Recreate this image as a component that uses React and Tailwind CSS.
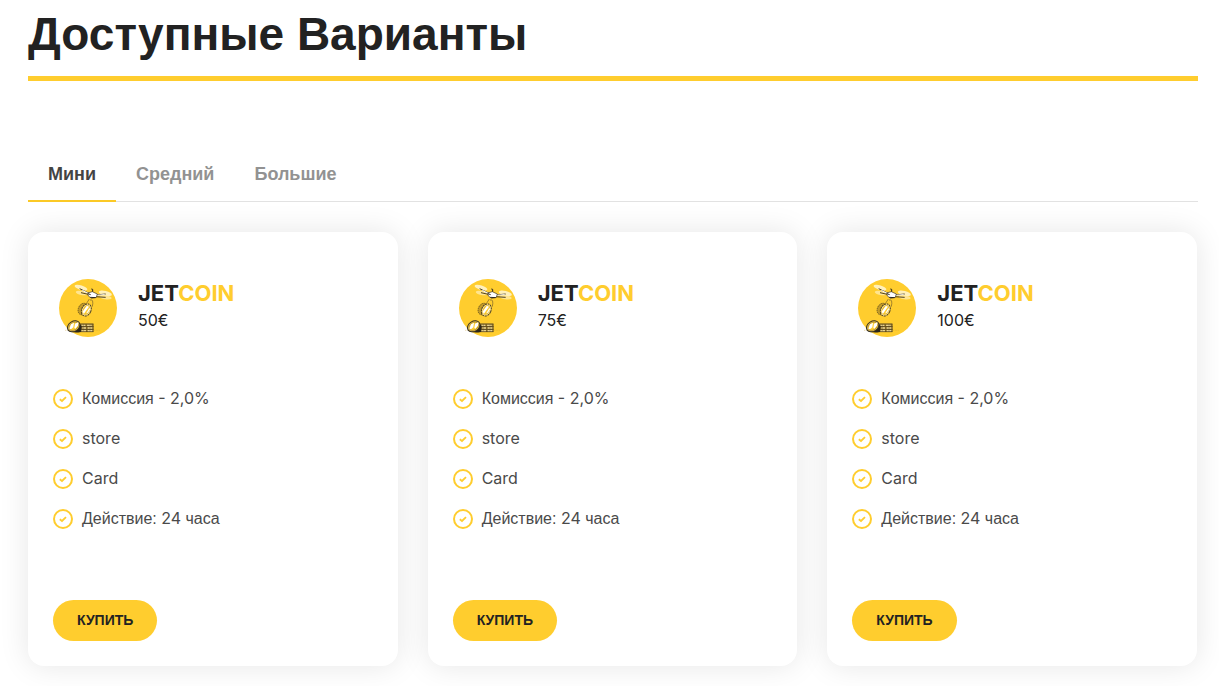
import { useState } from "react";

const tabs = ["Мини", "Средний", "Большие"];

const plans = [
  { id: 1, price: "50€" },
  { id: 2, price: "75€" },
  { id: 3, price: "100€" },
];

const features = [
  { label: "Комиссия", value: "- 2,0%" },
  { value: "store" },
  { value: "Card" },
  { label: "Действие:", value: "24", suffix: "часа" },
];

function DroneLogo() {
  return (
    <svg viewBox="0 0 174 174" className="size-[58px] shrink-0" aria-hidden="true">
      <circle cx="87" cy="87" r="87" fill="#ffcd2e" />
      {/* rotors */}
      <g fill="#fff0bb">
        <ellipse cx="66" cy="26" rx="20" ry="7" transform="rotate(17 66 26)" />
        <ellipse cx="68" cy="42" rx="18" ry="6" transform="rotate(10 68 42)" opacity="0.7" />
        <ellipse cx="139" cy="43" rx="20" ry="7" transform="rotate(14 139 43)" />
        <ellipse cx="140" cy="55" rx="18" ry="6" transform="rotate(8 140 55)" opacity="0.7" />
      </g>
      {/* body and arms */}
      <path d="M62 29l28 14M66 41l26 6M110 48l30-3M108 53l32 2" stroke="#4b3e20" strokeWidth="3" fill="none" />
      <path d="M70 34l18 9M113 49l24-2" stroke="#fff" strokeWidth="3" fill="none" />
      <path d="M86 42l14-4 15 7-3 10-14 3-10-7z" fill="#fff" stroke="#3a3220" strokeWidth="2" />
      <path d="M94 55l16 1M101 38v-7l-4-1M87 44l8 3" stroke="#29251c" strokeWidth="3" fill="none" />
      <path d="M91 60l-9 14M93 63q12-4 7 20" stroke="#755f29" strokeWidth="2" fill="none" />
      {/* carried coins */}
      <g transform="rotate(25 78 92)">
        <ellipse cx="71" cy="93" rx="13" ry="18" fill="#c59c27" stroke="#4b3e20" strokeWidth="2" strokeDasharray="4 2" />
        <ellipse cx="82" cy="91" rx="14" ry="19" fill="#ffe48a" stroke="#4b3e20" strokeWidth="3" strokeDasharray="6 2" />
        <ellipse cx="82" cy="91" rx="9" ry="14" fill="#ffcd2e" stroke="#a98526" strokeWidth="1" />
        <path d="M78 79l-4 21 6 5 5-26z" fill="#fff" />
        <path d="M88 81l-2 20 4-5 1-11z" fill="#fff" />
      </g>
      {/* coins on the ground */}
      <path d="M18 154h22M70 154h52" stroke="#c39b2a" strokeWidth="1" strokeDasharray="3 2" />
      <path d="M63 134h41v25H63z" fill="#9b7c2c" />
      <path d="M63 135h40M65 143h39M65 151h39M65 158h38" stroke="#3a3220" strokeWidth="2" fill="none" />
      <path d="M67 139h12M84 139h14M70 147h11M86 147h14M67 155h14M86 155h14" stroke="#e8d392" strokeWidth="4" />
      <path d="M73 135v22M83 137v21M93 136v22M102 135v23" stroke="#51411c" strokeWidth="1" />
      <path d="M27 153q13 11 39 6l2-18-16-16z" fill="#29251c" />
      <ellipse cx="44" cy="142" rx="20" ry="15" fill="#e3bf50" stroke="#3a3220" strokeWidth="3" transform="rotate(-32 44 142)" />
      <ellipse cx="44" cy="142" rx="15" ry="11" fill="#ffcd2e" stroke="#5e4b20" strokeWidth="1" transform="rotate(-32 44 142)" />
      <path d="M31 149l5-13 9-5-2 14-7 6zM46 146l2-12 10-4-1 10-8 9z" fill="#fff" />
    </svg>
  );
}

function CheckIcon() {
  return (
    <svg viewBox="0 0 20 20" className="size-5 shrink-0" fill="none" stroke="#ffcd2e" strokeWidth="2" aria-hidden="true">
      <circle cx="10" cy="10" r="9" />
      <path d="M6.8 10.2l2.2 1.8 4-3.9" strokeWidth="1.8" />
    </svg>
  );
}

function PlanCard({ price }) {
  return (
    <article className="rounded-2xl bg-white px-[25px] pt-[41px] pb-[25px] shadow-[0_0_30px_rgba(0,0,0,0.1)]">
      <div className="flex h-[70px] items-center gap-[21px] pl-[6px]">
        <DroneLogo />
        <div className="pb-[6px] font-['Inter',sans-serif] text-[#222]">
          <h2 className="text-[22px] leading-[30px] font-bold">
            JET<span className="text-[#ffcd2e]">COIN</span>
          </h2>
          <p className="text-base leading-6">{price}</p>
        </div>
      </div>

      <ul className="mt-9 flex flex-col text-base leading-[38px] text-[#4a4a4a]">
        {features.map((feature) => (
          <li key={feature.value} className="flex h-10 items-center gap-[9px]">
            <CheckIcon />
            <span className="pb-[2px]">
              {feature.label && `${feature.label} `}
              <span className="font-['Inter',sans-serif]">{feature.value}</span>
              {feature.suffix && ` ${feature.suffix}`}
            </span>
          </li>
        ))}
      </ul>

      <button
        type="button"
        className="mt-[61px] block h-[41px] rounded-full bg-[#ffcd2e] px-6 pb-[2px] text-sm font-bold text-[#222] uppercase"
      >
        Купить
      </button>
    </article>
  );
}

export default function App() {
  const [active, setActive] = useState(tabs[0]);

  return (
    <main className="bg-white pr-[21px] pb-5 pl-7 font-['Liberation_Sans',sans-serif]">
      <h1 className="border-b-5 border-[#ffcd2e] pt-1 pb-3 text-[46px] leading-[60px] font-bold text-[#222]">
        Доступные Варианты
      </h1>

      <div role="tablist" className="mt-[65px] flex border-b border-[#e2e2e2]">
        {tabs.map((tab) => (
          <button
            key={tab}
            type="button"
            role="tab"
            aria-selected={active === tab}
            onClick={() => setActive(tab)}
            className={`-mb-px h-14 border-b-2 px-5 pt-[2px] text-lg font-bold ${
              active === tab ? "border-[#fbc926] text-[#444]" : "border-transparent text-[#929292]"
            }`}
          >
            {tab}
          </button>
        ))}
      </div>

      <div className="mt-[30px] mr-px grid grid-cols-3 gap-[30px]">
        {plans.map((plan) => (
          <PlanCard key={plan.id} price={plan.price} />
        ))}
      </div>
    </main>
  );
}
